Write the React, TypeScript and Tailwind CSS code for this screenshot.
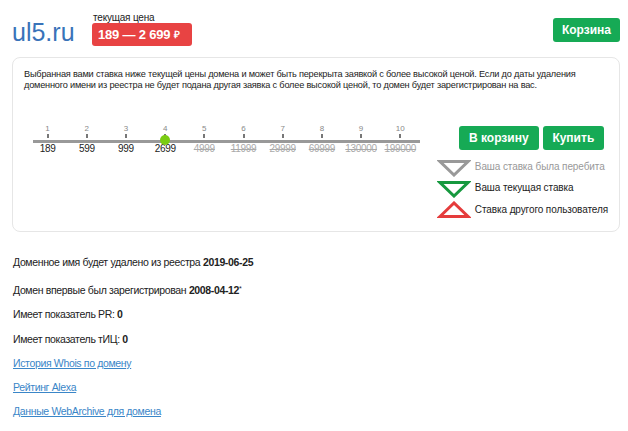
import React from 'react';

const steps = [
  { n: 1, v: '189', old: false },
  { n: 2, v: '599', old: false },
  { n: 3, v: '999', old: false },
  { n: 4, v: '2699', old: false },
  { n: 5, v: '4999', old: true },
  { n: 6, v: '11999', old: true },
  { n: 7, v: '29999', old: true },
  { n: 8, v: '69999', old: true },
  { n: 9, v: '130000', old: true },
  { n: 10, v: '199000', old: true },
];

function Tri({ color, up }: { color: string; up?: boolean }) {
  return (
    <svg width="34" height="17" viewBox="0 0 34 17" className="shrink-0">
      {up ? (
        <polygon points="3,15.5 17,2 31,15.5" fill="none" stroke={color} strokeWidth="3" />
      ) : (
        <polygon points="3,1.5 31,1.5 17,15" fill="none" stroke={color} strokeWidth="3" />
      )}
    </svg>
  );
}

export default function App() {
  return (
    <div className="w-[628px] h-[431px] bg-white text-[#222] font-['Liberation_Sans',Arial,sans-serif] pl-[12px] pr-[8px] pt-[12px]">
      <div className="flex items-start justify-between">
        <div className="flex items-start">
          <div className="text-[25px] leading-none text-[#3973b9] mt-[8px] w-[80px]">ul5.ru</div>
          <div className="flex flex-col">
            <span className="text-[10px] leading-[11px] ml-px tracking-[-0.2px]">текущая цена</span>
            <span className="bg-[#e84343] text-white font-bold text-[13px] leading-[23px] rounded-[3px] w-[100px] pl-[6px] h-[23px] tracking-[-0.2px]">
              189 — 2 699 <span className="text-[10px] align-top">₽</span>
            </span>
          </div>
        </div>
        <button className="mt-[6px] bg-[#16aa55] text-white font-bold text-[12px] h-[24px] px-[9px] rounded-[3px]">
          Корзина
        </button>
      </div>

      <div className="mt-[11px] border border-[#e6e6e6] rounded-[8px] pt-[11px] pl-[11px] pr-[11px] h-[175px]">
        <p className="text-[9.2px] leading-[11px] tracking-[-0.2px] text-[#222]">
          Выбранная вами ставка ниже текущей цены домена и может быть перекрыта заявкой с более высокой ценой. Если до даты удаления доменного имени из реестра не будет подана другая заявка с более высокой ценой, то домен будет зарегистрирован на вас.
        </p>
        <div className="flex mt-[24px]">
          <div className="relative w-[394px] ml-[4px] pt-[9px]">
            <div className="flex">
              {steps.map((s) => (
                <div key={s.n} className="w-[39.2px] flex flex-col items-center">
                  <span className="text-[8px] leading-[9px] text-[#888]">{s.n}</span>
                  <span className="w-[2px] h-[4px] bg-[#777] mt-[1px]" />
                </div>
              ))}
            </div>
            <div className="h-[3px] bg-[#999] mt-[2px] ml-[5px] mr-[2px]" />
            <div className="flex">
              {steps.map((s) => (
                <div key={s.n} className={`w-[39.2px] text-center text-[10px] leading-[12px] tracking-[-0.3px] ${s.old ? 'line-through text-[#aaa]' : 'text-[#222]'}`}>
                  {s.v}
                </div>
              ))}
            </div>
            <span className="absolute left-[132px] top-[20px] w-[10px] h-[10px] rounded-full bg-[#7acc12]" />
          </div>
          <div className="ml-auto flex flex-col items-start">
            <div className="flex gap-[4px] ml-[22px] mt-[11px]">
              <button className="bg-[#16aa55] text-white font-bold text-[12px] h-[24px] w-[80px] rounded-[3px]">В корзину</button>
              <button className="bg-[#16aa55] text-white font-bold text-[12px] h-[24px] w-[61px] rounded-[3px]">Купить</button>
            </div>
            <div className="flex items-center gap-[4px] mt-[10px]">
              <Tri color="#999" />
              <span className="text-[10px] text-[#999] -mt-[5px] tracking-[-0.1px]">Ваша ставка была перебита</span>
            </div>
            <div className="flex items-center gap-[4px] mt-[4px]">
              <Tri color="#16993f" />
              <span className="text-[10px] -mt-[4px] tracking-[-0.1px]">Ваша текущая ставка</span>
            </div>
            <div className="flex items-center gap-[4px] mt-[3px]">
              <Tri color="#e53c3c" up />
              <span className="text-[10px] -mt-[1px] tracking-[-0.1px]">Ставка другого пользователя</span>
            </div>
          </div>
        </div>
      </div>

      <div className="pl-px text-[10.5px] leading-[14px] tracking-[-0.35px] text-[#222]">
        <p className="mt-[23px]">Доменное имя будет удалено из реестра <b>2019-06-25</b></p>
        <p className="mt-[14px]">Домен впервые был зарегистрирован <b>2008-04-12</b><sup className="text-[7px]">*</sup></p>
        <p className="mt-[10px]">Имеет показатель PR: <b>0</b></p>
        <p className="mt-[11px]">Имеет показатель тИЦ: <b>0</b></p>
        <p className="mt-[10px]"><a className="text-[#3a86c8] underline">История Whois по домену</a></p>
        <p className="mt-[10px]"><a className="text-[#3a86c8] underline">Рейтинг Alexa</a></p>
        <p className="mt-[10px]"><a className="text-[#3a86c8] underline">Данные WebArchive для домена</a></p>
      </div>
    </div>
  );
}
